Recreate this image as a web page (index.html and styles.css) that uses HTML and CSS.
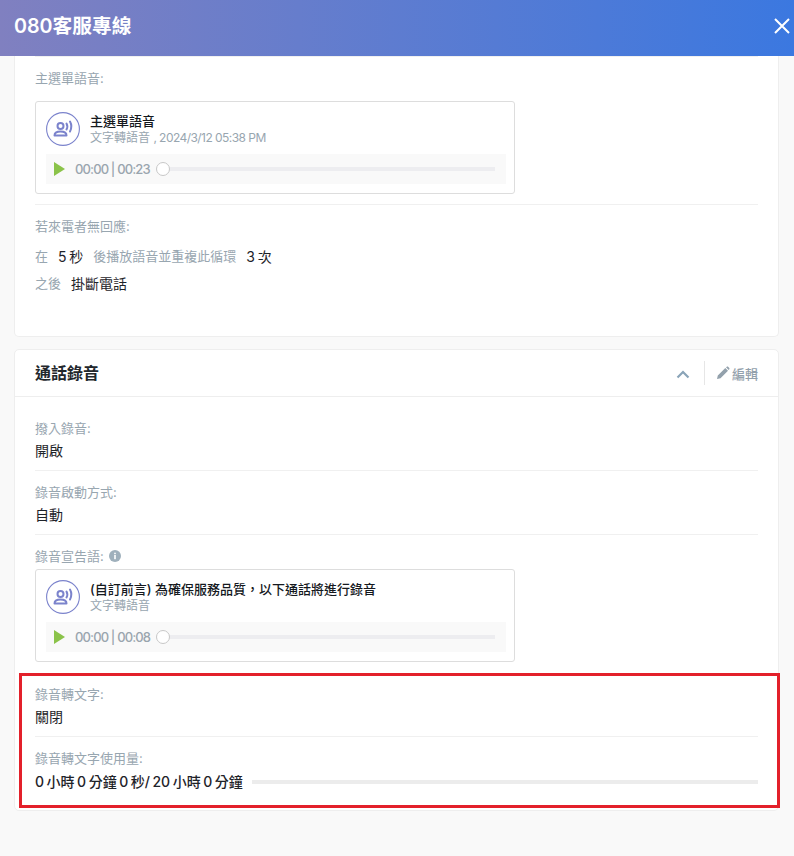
FILE: index.html
```html
<!DOCTYPE html>
<html lang="zh-Hant">
<head>
<meta charset="utf-8">
<title>080客服專線</title>
<link rel="stylesheet" href="styles.css">
</head>
<body>
<header class="topbar">
  <h1 class="topbar-title">080客服專線</h1>
  <svg class="close" viewBox="0 0 16 16" width="16" height="16"><path d="M1 1L15 15M15 1L1 15" stroke="#fff" stroke-width="2" fill="none"/></svg>
</header>
<main class="main">
  <section class="card card-first">
    <div class="card-body">
      <div class="field field-menu">
        <div class="label">主選單語音:</div>
        <div class="audio">
          <div class="audio-head">
            <svg class="voice" viewBox="0 0 34 34" width="34" height="34"><circle cx="17" cy="17" r="16.4" fill="none" stroke="#7b83cc" stroke-width="1.100"/><circle cx="14.500" cy="14" r="3" fill="none" stroke="#7b83cc" stroke-width="2"/><path d="M8.500 23.500c0-2.800 2.600-3.900 6-3.900s6 1.100 6 3.900z" fill="none" stroke="#7b83cc" stroke-width="2" stroke-linejoin="round"/><path d="M20.500 11.500c1 1.800 1 4.200 0 6M24 9.500c1.700 3 1.700 6.700 0 10" fill="none" stroke="#7b83cc" stroke-width="2" stroke-linecap="round"/></svg>
            <div class="audio-text">
              <div class="audio-title">主選單語音</div>
              <div class="audio-sub">文字轉語音 <span class="tight">, 2024/3/12 05:38 PM</span></div>
            </div>
          </div>
          <div class="player">
            <svg class="play" viewBox="0 0 11 14" width="11" height="14"><path d="M0 0L11 7L0 14z" fill="#8bc34a"/></svg>
            <span class="time">00:00 | 00:23</span>
            <div class="track"><span class="knob"></span></div>
          </div>
        </div>
      </div>
      <div class="field field-noanswer">
        <div class="label">若來電者無回應:</div>
        <div class="inline-row inline-first">
          <span class="label">在</span><span class="value v-a">5 秒</span>
          <span class="label">後播放語音並重複此循環</span><span class="value v-b">3 次</span>
        </div>
        <div class="inline-row">
          <span class="label">之後</span><span class="value v-c">掛斷電話</span>
        </div>
      </div>
    </div>
  </section>

  <section class="card card-second">
    <div class="card-head">
      <h2 class="card-title">通話錄音</h2>
      <div class="head-actions">
        <svg class="chevron" viewBox="0 0 14 9" width="14" height="9"><path d="M1.500 7.500L7 2L12.500 7.500" fill="none" stroke="#8aa4b8" stroke-width="2.200"/></svg>
        <span class="head-sep"></span>
        <span class="edit">
          <svg viewBox="0 0 14 14" width="14" height="14"><path d="M1 13l.8-3.500L9.300 2l2.700 2.700-7.500 7.500zM10 1.300l.8-.6c.4-.3.900-.3 1.300 0l1.200 1.200c.3.400.3.900 0 1.300l-.6.800z" fill="#93a1ac"/></svg>
          編輯
        </span>
      </div>
    </div>
    <div class="card-body">
      <div class="field field-line field-top">
        <div class="label">撥入錄音:</div>
        <div class="value">開啟</div>
      </div>
      <div class="field field-line">
        <div class="label">錄音啟動方式:</div>
        <div class="value">自動</div>
      </div>
      <div class="field field-prompt">
        <div class="label label-icon">錄音宣告語:
          <svg viewBox="0 0 12 12" width="12" height="12"><circle cx="6" cy="6" r="6" fill="#9fb0bc"/><rect x="5.200" y="5" width="1.600" height="4.200" fill="#fff"/><rect x="5.200" y="2.700" width="1.600" height="1.500" fill="#fff"/></svg>
        </div>
        <div class="audio">
          <div class="audio-head">
            <svg class="voice" viewBox="0 0 34 34" width="34" height="34"><circle cx="17" cy="17" r="16.4" fill="none" stroke="#7b83cc" stroke-width="1.100"/><circle cx="14.500" cy="14" r="3" fill="none" stroke="#7b83cc" stroke-width="2"/><path d="M8.500 23.500c0-2.800 2.600-3.900 6-3.900s6 1.100 6 3.900z" fill="none" stroke="#7b83cc" stroke-width="2" stroke-linejoin="round"/><path d="M20.500 11.500c1 1.800 1 4.200 0 6M24 9.500c1.700 3 1.700 6.700 0 10" fill="none" stroke="#7b83cc" stroke-width="2" stroke-linecap="round"/></svg>
            <div class="audio-text">
              <div class="audio-title">(自訂前言) 為確保服務品質，以下通話將進行錄音</div>
              <div class="audio-sub">文字轉語音</div>
            </div>
          </div>
          <div class="player">
            <svg class="play" viewBox="0 0 11 14" width="11" height="14"><path d="M0 0L11 7L0 14z" fill="#8bc34a"/></svg>
            <span class="time">00:00 | 00:08</span>
            <div class="track"><span class="knob"></span></div>
          </div>
        </div>
      </div>
      <div class="field field-line">
        <div class="label">錄音轉文字:</div>
        <div class="value">關閉</div>
      </div>
      <div class="field field-usage">
        <div class="label">錄音轉文字使用量:</div>
        <div class="usage-row">
          <span class="value">0 小時 0 分鐘 0 秒/ 20 小時 0 分鐘</span>
          <span class="usage-bar"></span>
        </div>
      </div>
    </div>
    <div class="highlight"></div>
  </section>
</main>
</body>
</html>
```
FILE: styles.css
```css
* { box-sizing: border-box; }
html, body { margin: 0; padding: 0; }
body {
  width: 794px;
  height: 856px;
  overflow: hidden;
  background: #f9f9f9;
  font-family: Inter, "Noto Sans CJK TC", sans-serif;
  font-size: 13px;
  color: #1e2329;
}
.topbar {
  height: 56px;
  display: flex;
  align-items: center;
  justify-content: space-between;
  padding: 0 4px 4px 14px;
  background: linear-gradient(90deg, #8080c0 0%, #3b78e0 100%);
}
.topbar-title { margin: 0; font-size: 19.700px; line-height: 26px; font-weight: 600; color: #fff; }
.main { padding: 0 15px 0 14px; }
.card {
  position: relative;
  background: #fff;
  border: 1px solid #eeeeee;
  border-radius: 5px;
}
.card-first { height: 281px; border-top: 0; border-radius: 0 0 5px 5px; }
.card-second { margin-top: 12px; height: 462px; }
.card-body { padding: 0 20px; }
.label { color: #98a6b0; font-size: 13px; line-height: 18px; }
.value { color: #1e2329; font-size: 14px; line-height: 18px; word-spacing: -1.200px; }
.field { border-bottom: 1px solid #f0f0f0; }
.field-menu { height: 149px; padding-top: 12px; border-top: 1px solid #f0f0f0; }
.field-noanswer { border-bottom: 0; padding-top: 12px; }
.audio {
  margin-top: 14px;
  width: 480px;
  height: 93px;
  padding: 10px 8px 0 10px;
  border: 1px solid #dddddd;
  border-radius: 3px;
}
.audio-head { display: flex; height: 34px; gap: 10px; align-items: center; margin-bottom: 8px; }
.audio-title { font-size: 13px; line-height: 18px; font-weight: 500; color: #15191e; }
.audio-sub { font-size: 12px; line-height: 16px; color: #98a6b0; }
.tight { letter-spacing: -0.55px; }
.voice { flex: none; }
.player {
  height: 30px;
  display: flex;
  align-items: center;
  padding: 0 11px 0 8px;
  background: #f9f9f9;
}
.time { margin-left: 10px; font-size: 13px; font-weight: 500; letter-spacing: -0.85px; color: #9aa5ae; white-space: nowrap; }
.track {
  position: relative;
  flex: 1;
  height: 4px;
  margin-left: 6px;
  background: #ededf0;
}
.knob {
  position: absolute;
  left: 0;
  top: -5px;
  width: 14px;
  height: 14px;
  border: 1px solid #c8c8c8;
  border-radius: 50%;
  background: #fff;
}
.inline-row { display: flex; align-items: center; height: 27px; }
.inline-first { margin-top: 8px; height: 26px; }
.v-a { margin: 2px 10px 0 10px; }
.v-b { margin: 2px 0 0 10px; }
.v-c { margin: 2px 0 0 10px; }
.card-head {
  height: 47px;
  display: flex;
  align-items: center;
  justify-content: space-between;
  padding: 0 20px;
  border-bottom: 1px solid #eeeeee;
}
.card-title { margin: 0; font-size: 16px; line-height: 22px; font-weight: 700; color: #22272c; }
.head-actions { display: flex; align-items: center; }
.chevron { margin-top: 3px; }
.head-sep { width: 1px; height: 24px; margin: 0 12px 0 14px; background: #e6e6e6; }
.edit { display: flex; align-items: center; gap: 2px; font-size: 13px; font-weight: 500; color: #93a1ac; }
.edit svg { margin-left: -1px; }
.field-line { height: 64px; padding-top: 12px; }
.field-line .value { margin-top: 5px; }
.field-top { height: 74px; padding-top: 22px; }
.field-prompt { height: 138px; padding-top: 12px; border-bottom: 0; }
.field-prompt .audio { margin-top: 4px; height: 93px; }
.label-icon { display: flex; align-items: center; gap: 5px; }
.field-usage { border-bottom: 0; padding-top: 12px; }
.usage-row { display: flex; align-items: center; gap: 9px; margin-top: 6px; }
.usage-row .value { font-weight: 500; white-space: nowrap; }
.usage-bar { flex: 1; height: 4px; background: #ececec; }
.highlight {
  position: absolute;
  left: 4px;
  top: 323px;
  width: 761px;
  height: 135px;
  border: 3px solid #e3202a;
  pointer-events: none;
}
```
